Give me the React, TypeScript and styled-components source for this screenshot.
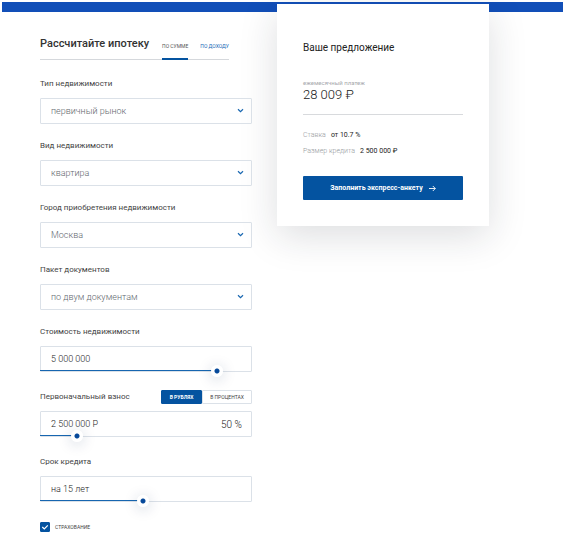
import React, { useId, useState } from "react";
import styled, { createGlobalStyle } from "styled-components";

const blue = "#0453a0";
const line = "#dbe1e8";

const GlobalStyle = createGlobalStyle`
  *, *::before, *::after { box-sizing: border-box; }
  body {
    margin: 0;
    background: #fff;
    color: #3c3f44;
    font-family: Roboto, "Liberation Sans", sans-serif;
    font-size: 9px;
  }
  button, input, select { font: inherit; color: inherit; margin: 0; }
`;

const Page = styled.div`
  padding: 2px 2px 16px;
`;

const Band = styled.div`
  height: 10px;
  background: #124fb8;
`;

const Main = styled.main`
  display: grid;
  grid-template-columns: minmax(0, 1fr) minmax(0, 1fr);
  align-items: start;
  gap: 25px;
  padding: 0 74px 0 38px;
`;

const Form = styled.form`
  display: flex;
  flex-direction: column;
  padding-top: 20px;
`;

const FormHead = styled.div`
  display: flex;
  align-items: stretch;
  height: 28px;
  margin: 0 23px 16px 0;
  border-bottom: 1px solid #d5d8dc;
`;

const Title = styled.h1`
  margin: 0 auto 0 0;
  font-size: 11px;
  font-weight: 500;
  line-height: 24px;
  color: #333;
  white-space: nowrap;
`;

const Tab = styled.button<{ $active?: boolean }>`
  height: 28px;
  margin-left: 12px;
  padding: 2px 0 0;
  border: 0;
  border-bottom: 2px solid ${(p) => (p.$active ? blue : "transparent")};
  background: none;
  color: ${(p) => (p.$active ? "#555" : "#1766b5")};
  font-size: 5px;
  line-height: 24px;
  text-transform: uppercase;
  white-space: nowrap;
  cursor: pointer;
`;

const Field = styled.div<{ $slider?: boolean }>`
  display: flex;
  flex-direction: column;
  gap: 6px;
  margin-bottom: ${(p) => (p.$slider ? 17 : 14)}px;
`;

const FieldHead = styled.div`
  display: flex;
  align-items: center;
  justify-content: space-between;
  height: 16px;
`;

const Label = styled.label`
  font-size: 8px;
  line-height: 16px;
  color: #444;
  white-space: nowrap;
`;

const Box = styled.div`
  position: relative;
  display: flex;
  align-items: center;
  height: 26px;
  border: 1px solid ${line};
  border-radius: 1px;
`;

const Select = styled.select`
  appearance: none;
  width: 100%;
  height: 100%;
  padding: 0 24px 0 10px;
  border: 0;
  background: none;
  color: #62676e;
  font-size: 9px;
  font-weight: 300;
`;

const Chevron = styled.svg`
  position: absolute;
  right: 7px;
  top: 8px;
  width: 7px;
  height: 7px;
  pointer-events: none;
`;

const TextInput = styled.input`
  flex: 1;
  min-width: 0;
  height: 100%;
  padding: 0 0 0 10px;
  border: 0;
  background: none;
  color: #222;
  font-size: 9px;
  font-weight: 300;
`;

const Share = styled.span`
  padding-right: 9px;
  font-size: 10px;
  font-weight: 300;
  color: #222;
`;

const Range = styled.input`
  --fill: calc(6px + (100% - 12px) * var(--ratio));
  appearance: none;
  position: absolute;
  left: -1px;
  right: -1px;
  bottom: -6px;
  width: calc(100% + 2px);
  height: 12px;
  background: linear-gradient(#1766b0, #1766b0) 0 5px / var(--fill) 1px no-repeat;
  cursor: pointer;

  &::-webkit-slider-thumb {
    appearance: none;
    width: 12px;
    height: 12px;
    border-radius: 50%;
    background: radial-gradient(circle, #06499a 2px, #fff 3px);
    box-shadow: 0 2px 14px rgba(20, 40, 90, 0.22);
  }
`;

const Segments = styled.div`
  display: flex;
  width: 91px;
  height: 14px;
`;

const Segment = styled.button<{ $active?: boolean }>`
  flex: ${(p) => (p.$active ? "0 0 41px" : "1")};
  padding: 0;
  border: 1px solid ${(p) => (p.$active ? blue : line)};
  border-radius: 1px;
  background: ${(p) => (p.$active ? blue : "#fff")};
  color: ${(p) => (p.$active ? "#fff" : "#444")};
  font-size: 5px;
  font-weight: ${(p) => (p.$active ? 700 : 400)};
  line-height: 12px;
  text-transform: uppercase;
  white-space: nowrap;
  cursor: pointer;
`;

const CheckLabel = styled.label`
  display: flex;
  align-items: center;
  gap: 5px;
  margin-top: 3px;
  font-size: 5px;
  line-height: 10px;
  text-transform: uppercase;
  color: #444;
`;

const CheckMark = styled.span`
  display: grid;
  width: 10px;
  height: 10px;

  & > * { grid-area: 1 / 1; width: 10px; height: 10px; }
  & > svg { pointer-events: none; visibility: hidden; }
  & > input:checked + svg { visibility: visible; }
`;

const Check = styled.input`
  appearance: none;
  border: 1px solid ${blue};
  border-radius: 1px;
  &:checked { background: ${blue}; }
`;

const Card = styled.section`
  margin-top: -8px;
  padding: 34px 26px 26px;
  background: #fff;
  box-shadow: 0 10px 36px rgba(30, 35, 50, 0.15);
`;

const CardTitle = styled.h2`
  margin: 0 0 22px;
  font-size: 10px;
  font-weight: 400;
  line-height: 20px;
  color: #222;
`;

const Caption = styled.div`
  font-size: 6px;
  line-height: 6px;
  color: #a5a8ac;
`;

const Payment = styled.div`
  padding-bottom: 10px;
  margin-bottom: 12px;
  border-bottom: 1px solid #d8dadd;
  font-size: 13px;
  font-weight: 300;
  line-height: 18px;
  color: #222;
`;

const Terms = styled.dl`
  margin: 0 0 17px;
`;

const Term = styled.div`
  display: flex;
  gap: 5px;
  font-size: 7px;
  line-height: 16px;

  dt { color: #96999d; font-weight: 300; }
  dd { margin: 0; color: #222; }
`;

const Submit = styled.button`
  display: flex;
  align-items: center;
  justify-content: center;
  gap: 6px;
  width: 100%;
  height: 24px;
  padding: 0;
  border: 0;
  border-radius: 1px;
  background: ${blue};
  color: #fff;
  font-size: 7px;
  font-weight: 700;
  cursor: pointer;
`;

function SelectField({ label, value }: { label: string; value: string }) {
  const id = useId();
  return (
    <Field>
      <Label htmlFor={id}>{label}</Label>
      <Box>
        <Select id={id} defaultValue={value}>
          <option>{value}</option>
        </Select>
        <Chevron viewBox="0 0 7 7" fill="none" stroke="#1766b0" strokeWidth="1.2">
          <path d="M1 2.2 3.5 4.6 6 2.2" />
        </Chevron>
      </Box>
    </Field>
  );
}

interface SliderFieldProps {
  label: string;
  value: string;
  position: number;
  share?: string;
  children?: React.ReactNode;
}

function SliderField({ label, value, position, share, children }: SliderFieldProps) {
  const id = useId();
  const [pos, setPos] = useState(position);
  return (
    <Field $slider>
      <FieldHead>
        <Label htmlFor={id}>{label}</Label>
        {children}
      </FieldHead>
      <Box>
        <TextInput id={id} defaultValue={value} />
        {share && <Share>{share}</Share>}
        <Range
          type="range"
          aria-label={label}
          min={0}
          max={200}
          value={pos}
          onChange={(e) => setPos(Number(e.target.value))}
          style={{ "--ratio": pos / 200 } as React.CSSProperties}
        />
      </Box>
    </Field>
  );
}

export default function App() {
  return (
    <Page>
      <GlobalStyle />
      <Band />
      <Main>
        <Form onSubmit={(e) => e.preventDefault()}>
          <FormHead>
            <Title>Рассчитайте ипотеку</Title>
            <Tab type="button" $active>По сумме</Tab>
            <Tab type="button">По доходу</Tab>
          </FormHead>
          <SelectField label="Тип недвижимости" value="первичный рынок" />
          <SelectField label="Вид недвижимости" value="квартира" />
          <SelectField label="Город приобретения недвижимости" value="Москва" />
          <SelectField label="Пакет документов" value="по двум документам" />
          <SliderField label="Стоимость недвижимости" value="5 000 000" position={171} />
          <SliderField label="Первоначальный взнос" value="2 500 000 Р" share="50 %" position={31}>
            <Segments>
              <Segment type="button" $active>В рублях</Segment>
              <Segment type="button">В процентах</Segment>
            </Segments>
          </SliderField>
          <SliderField label="Срок кредита" value="на 15 лет" position={97} />
          <CheckLabel>
            <CheckMark>
              <Check type="checkbox" defaultChecked />
              <svg viewBox="0 0 10 10" fill="none" stroke="#fff" strokeWidth="1.2">
                <path d="M2.3 5 4.3 7 7.8 3.4" />
              </svg>
            </CheckMark>
            Страхование
          </CheckLabel>
        </Form>
        <Card>
          <CardTitle>Ваше предложение</CardTitle>
          <Caption>ежемесячный платеж</Caption>
          <Payment>28 009 ₽</Payment>
          <Terms>
            <Term><dt>Ставка</dt><dd>от 10.7 %</dd></Term>
            <Term><dt>Размер кредита</dt><dd>2 500 000 ₽</dd></Term>
          </Terms>
          <Submit type="button">
            Заполнить экспресс-анкету
            <svg width="7" height="7" viewBox="0 0 7 7" fill="none" stroke="#fff" strokeWidth="0.9">
              <path d="M0 3.5H6.3M3.8 1 6.3 3.5 3.8 6" />
            </svg>
          </Submit>
        </Card>
      </Main>
    </Page>
  );
}
